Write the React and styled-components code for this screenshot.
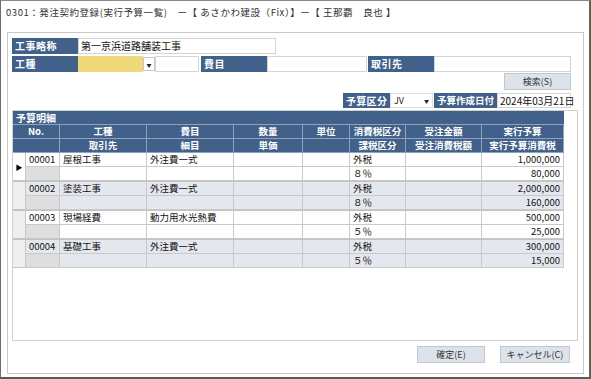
import React from 'react'
import styled, { createGlobalStyle } from 'styled-components'

const GlobalStyle = createGlobalStyle`
  html, body {
    margin: 0;
    padding: 0;
    background: #ffffff;
  }
  body {
    font-family: "Noto Sans CJK JP", "Noto Sans", sans-serif;
    color: #222;
  }
`;

const BLUE = '#41618b';
const COLS = '13px 34px 87px 87px 69px 47px 56px 76px 82px';

const Window = styled.div`
  box-sizing: border-box;
  width: 591px;
  height: 379px;
  border-top: 1px solid #8a8a8a;
  border-left: 1px solid #6b6b6b;
  border-right: 2px solid #5b6a4c;
  border-bottom: 2px solid #5a5a5a;
  background: #fff;
  display: flex;
  flex-direction: column;
`;

const TitleBar = styled.div`
  height: 30px;
  padding: 5px 0 0 5px;
  box-sizing: border-box;
  font-size: 9.5px;
  letter-spacing: 0.55px;
  line-height: 13px;
  color: #333;
  white-space: nowrap;
`;

const Panel = styled.div`
  box-sizing: border-box;
  margin: 1px 0 0 6px;
  width: 577px;
  height: 342px;
  border: 1px solid #c9c9c9;
  padding: 5px 0 0 4px;
  display: flex;
  flex-direction: column;
`;

const Form = styled.div`
  width: 559px;
  display: flex;
  flex-direction: column;
`;

const FormRow = styled.div`
  display: flex;
  justify-content: ${({ $right }) => ($right ? 'flex-end' : 'flex-start')};
  height: ${({ $h }) => $h || 16}px;
  margin-top: ${({ $mt }) => $mt || 0}px;
`;

const Label = styled.div`
  box-sizing: border-box;
  width: ${({ $w }) => $w}px;
  height: 100%;
  margin-left: ${({ $ml }) => $ml || 0}px;
  background: ${BLUE};
  color: #fff;
  font-size: ${({ $fs }) => $fs || 10}px;
  font-weight: 700;
  line-height: 15px;
  padding-left: 3px;
  white-space: nowrap;
  letter-spacing: ${({ $ls }) => ($ls === undefined ? 0.5 : $ls)}px;
  overflow: hidden;
`;

const Input = styled.div`
  box-sizing: border-box;
  width: ${({ $w }) => $w}px;
  height: 100%;
  background: ${({ $bg }) => $bg || '#fff'};
  border: 1px solid ${({ $bg }) => ($bg ? $bg : '#d4d4d4')};
  font-size: 10px;
  line-height: ${({ $lh }) => $lh || 14}px;
  padding-left: 2px;
  color: #111;
  white-space: nowrap;
`;

const DropButton = styled.div`
  box-sizing: border-box;
  width: 12px;
  height: 14px;
  margin-top: 1px;
  background: #fff;
  border: 1px solid #c8c8c8;
  display: flex;
  align-items: center;
  justify-content: center;
  font-size: 5px;
  color: #222;
`;

const SelectBox = styled.div`
  box-sizing: border-box;
  width: ${({ $w }) => $w}px;
  height: 100%;
  background: #fff;
  border: 1px solid #e0e0e0;
  display: flex;
  align-items: center;
  justify-content: space-between;
  padding: 0 3px 0 3px;
  font-size: 9px;
`;

const Arrow = styled.span`
  font-size: 5px;
  color: #222;
`;

const Button = styled.div`
  box-sizing: border-box;
  width: ${({ $w }) => $w}px;
  height: 17px;
  background: #dde3ea;
  border: 1px solid #c2c7ce;
  font-size: 9px;
  line-height: 15px;
  text-align: center;
  color: #333;
`;

const GridBox = styled.div`
  box-sizing: border-box;
  margin-top: 2px;
  width: 566px;
  height: 231px;
  border: 1px solid #cfcfcf;
  display: flex;
  flex-direction: column;
`;

const GridTitle = styled.div`
  width: 551px;
  height: 14px;
  background: ${BLUE};
  color: #fff;
  font-size: 10px;
  font-weight: 700;
  line-height: 14px;
  padding-left: 3px;
  box-sizing: border-box;
  border-bottom: 1px solid #8ea3bf;
`;

const HeadGrid = styled.div`
  display: grid;
  grid-template-columns: ${COLS};
  grid-template-rows: 14px 14px;
  width: 551px;
  background: ${BLUE};
`;

const HeadCell = styled.div`
  box-sizing: border-box;
  grid-column: ${({ $span }) => $span || 'auto'};
  border-right: 1px solid #8ea3bf;
  border-bottom: 1px solid #8ea3bf;
  color: #fff;
  font-size: 9.5px;
  font-weight: 700;
  line-height: 13px;
  text-align: center;
  white-space: nowrap;
`;

const Group = styled.div`
  display: grid;
  grid-template-columns: ${COLS};
  grid-template-rows: 14px 14px;
  width: 551px;
  border-top: ${({ $first }) => ($first ? 'none' : '1px solid #c2c2c2')};
  background: ${({ $alt }) => ($alt ? '#e4e8ee' : '#fff')};
`;

const RowHead = styled.div`
  box-sizing: border-box;
  grid-row: span 2;
  background: ${({ $current }) => ($current ? '#fff' : '#efefef')};
  border-right: 1px solid #c6c6c6;
  border-bottom: 1px solid #c6c6c6;
  display: flex;
  align-items: center;
  justify-content: center;
  font-size: 7px;
  color: #000;
`;

const Cell = styled.div`
  box-sizing: border-box;
  border-right: 1px solid #c9c9c9;
  border-bottom: 1px solid #c9c9c9;
  background: ${({ $gray }) => ($gray ? '#dedede' : 'transparent')};
  font-size: 9.5px;
  line-height: 13px;
  padding: 0 3px;
  text-align: ${({ $num }) => ($num ? 'right' : 'left')};
  white-space: nowrap;
  color: #111;
`;

const Footer = styled.div`
  display: flex;
  justify-content: flex-end;
  gap: 15px;
  width: 558px;
  margin-top: 5px;
`;

const rows = [
  { no: '00001', kind: '屋根工事', item: '外注費一式', rate: '８％', budget: '1,000,000', tax: '80,000', alt: false, current: true },
  { no: '00002', kind: '塗装工事', item: '外注費一式', rate: '８％', budget: '2,000,000', tax: '160,000', alt: true },
  { no: '00003', kind: '現場経費', item: '動力用水光熱費', rate: '５％', budget: '500,000', tax: '25,000', alt: false },
  { no: '00004', kind: '基礎工事', item: '外注費一式', rate: '５％', budget: '300,000', tax: '15,000', alt: true },
];

const head1 = ['工種', '費目', '数量', '単位', '消費税区分', '受注金額', '実行予算'];
const head2 = ['取引先', '細目', '単価', '', '課税区分', '受注消費税額', '実行予算消費税'];

const App = () => {
  return (
    <>
      <GlobalStyle />
      <Window>
        <TitleBar>0301：発注契約登録(実行予算一覧)　ー【 あさかわ建設（Fix）】ー【 王那覇　良也 】</TitleBar>
        <Panel>
          <Form>
            <FormRow>
              <Label $w={66}>工事略称</Label>
              <Input $w={198}>第一京浜道路舗装工事</Input>
            </FormRow>
            <FormRow $mt={2}>
              <Label $w={66}>工種</Label>
              <Input $w={65} $bg="#efd97a" />
              <DropButton>▼</DropButton>
              <Input $w={44} />
              <Label $w={66} $ml={2}>費目</Label>
              <Input $w={100} />
              <Label $w={66} $ml={1}>取引先</Label>
              <Input $w={137} />
            </FormRow>
            <FormRow $right $h={17} $mt={1}>
              <Button $w={67}>検索(S)</Button>
            </FormRow>
            <FormRow $right $h={15} $mt={3}>
              <Label $w={47} $ls={0.3}>予算区分</Label>
              <SelectBox $w={43}>JV<Arrow>▼</Arrow></SelectBox>
              <Label $w={63} $ml={1} $ls={0} $fs={9.5}>予算作成日付</Label>
              <Input $w={74} $lh={13}>2024年03月21日</Input>
            </FormRow>
          </Form>
          <GridBox>
            <GridTitle>予算明細</GridTitle>
            <HeadGrid>
              <HeadCell $span="1 / 3">No.</HeadCell>
              {head1.map((h, i) => (
                <HeadCell key={'a' + i}>{h}</HeadCell>
              ))}
              <HeadCell $span="1 / 3" />
              {head2.map((h, i) => (
                <HeadCell key={'b' + i}>{h}</HeadCell>
              ))}
            </HeadGrid>
            {rows.map((r, i) => (
              <Group key={r.no} $alt={r.alt} $first={i === 0}>
                <RowHead $current={r.current}>{r.current ? '▶' : ''}</RowHead>
                <Cell>{r.no}</Cell>
                <Cell>{r.kind}</Cell>
                <Cell>{r.item}</Cell>
                <Cell />
                <Cell />
                <Cell>外税</Cell>
                <Cell />
                <Cell $num>{r.budget}</Cell>
                <Cell $gray />
                <Cell />
                <Cell />
                <Cell />
                <Cell />
                <Cell>{r.rate}</Cell>
                <Cell />
                <Cell $num>{r.tax}</Cell>
              </Group>
            ))}
          </GridBox>
          <Footer>
            <Button $w={68}>確定(E)</Button>
            <Button $w={70}>キャンセル(C)</Button>
          </Footer>
        </Panel>
      </Window>
    </>
  )
}

export default App
